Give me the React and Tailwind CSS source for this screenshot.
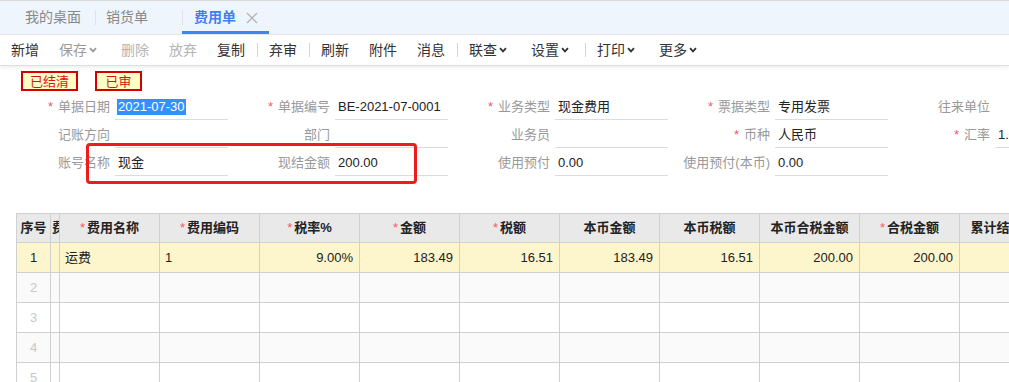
import React from "react";

const Chevron = () => (
  <svg width="8" height="6" viewBox="0 0 8 6" className="ml-[2px]">
    <path d="M1 1.2 L4 4.4 L7 1.2" fill="none" stroke="currentColor" strokeWidth="1.8" />
  </svg>
);

const toolbar = [
  { t: "新增" },
  { t: "保存", c: 1, cls: "text-[#9a9a9a]" },
  { t: "删除", cls: "text-[#b4b4b4]" },
  { t: "放弃", cls: "text-[#b4b4b4]" },
  { t: "复制" },
  "|",
  { t: "弃审" },
  "|",
  { t: "刷新" },
  { t: "附件" },
  { t: "消息" },
  "|",
  { t: "联查", c: 1 },
  { t: "设置", c: 1 },
  "|",
  { t: "打印", c: 1 },
  { t: "更多", c: 1 },
];

const rows = [
  [
    { l: "单据日期", r: 1, v: "2021-07-30", sel: 1 },
    { l: "单据编号", r: 1, v: "BE-2021-07-0001" },
    { l: "业务类型", r: 1, v: "现金费用" },
    { l: "票据类型", r: 1, v: "专用发票" },
    { l: "往来单位", noLine: 1 },
  ],
  [
    { l: "记账方向" },
    { l: "部门" },
    { l: "业务员" },
    { l: "币种", r: 1, v: "人民币" },
    { l: "汇率", r: 1, v: "1.00" },
  ],
  [
    { l: "账号名称", v: "现金" },
    { l: "现结金额", v: "200.00" },
    { l: "使用预付", v: "0.00" },
    { l: "使用预付(本币)", v: "0.00" },
    null,
  ],
];

const cols = [
  { w: "w-[34px]", h: "序号", a: "center" },
  { w: "w-[9px]", h: "费用类型", a: "clip" },
  { w: "w-[100px]", h: "费用名称", r: 1, a: "left" },
  { w: "w-[100px]", h: "费用编码", r: 1, a: "left" },
  { w: "w-[100px]", h: "税率%", r: 1, a: "right" },
  { w: "w-[100px]", h: "金额", r: 1, a: "right" },
  { w: "w-[100px]", h: "税额", r: 1, a: "right" },
  { w: "w-[100px]", h: "本币金额", a: "right" },
  { w: "w-[100px]", h: "本币税额", a: "right" },
  { w: "w-[100px]", h: "本币合税金额", a: "right" },
  { w: "w-[100px]", h: "合税金额", r: 1, a: "right" },
  { w: "w-[100px]", h: "累计结算金额", a: "right" },
];

const row1 = ["1", "", "运费", "1", "9.00%", "183.49", "16.51", "183.49", "16.51", "200.00", "200.00", ""];

const rowBg = ["bg-[#fdf5cc]", "bg-[#fafafa]", "bg-white", "bg-[#fafafa]", "bg-white"];

export default function App() {
  return (
    <div className="relative w-[1009px] h-[382px] overflow-hidden bg-white [font-family:'Liberation_Sans','Noto_Sans_CJK_SC',sans-serif] text-[13px] text-[#222]">
      {/* Tab bar */}
      <div className="h-[35px] border-t border-t-[#d9d9d9] border-b border-b-[#e1e5eb] bg-[#eff5fd] flex items-stretch text-[14px]">
        <div className="w-[95px] pl-[25px] flex items-center text-[#888]">我的桌面</div>
        <div className="w-px bg-[#dde2e8] my-[9px]" />
        <div className="w-[86px] pl-[10px] flex items-center text-[#888]">销货单</div>
        <div className="w-px bg-[#dde2e8] my-[9px]" />
        <div className="relative w-[86px] pl-[11px] flex items-center text-[#3d7ef5] font-bold">
          费用单
          <svg width="12" height="12" viewBox="0 0 12 12" className="ml-[10px]">
            <path d="M1 1 L11 11 M11 1 L1 11" stroke="#b5b5b5" strokeWidth="1.4" />
          </svg>
          <div className="absolute left-[-1px] right-0 bottom-0 h-[3px] bg-[#3d85f0]" />
        </div>
      </div>

      {/* Toolbar */}
      <div className="h-[31px] border-b border-[#dedede] shadow-[0_2px_3px_rgba(0,0,0,0.06)] flex items-center pl-[1px] text-[14px] text-[#333]">
        {toolbar.map((it, i) =>
          it === "|" ? (
            <div key={i} className="w-px h-[14px] bg-[#d6d6d6] ml-[2px] mr-[1px]" />
          ) : (
            <div key={i} className={`px-[10px] flex items-center ${it.cls || ""}`}>
              {it.t}
              {it.c ? (
                <span className="w-[14px] flex items-center">
                  <Chevron />
                </span>
              ) : null}
            </div>
          )
        )}
      </div>

      {/* Badges */}
      <div className="flex mt-[5px] pl-[21px] gap-[17px] text-[13px] text-[#e01010]">
        <div className="w-[57px] h-[20px] border-2 border-[#d40000] bg-[#ffffc6] flex items-center justify-center leading-none">已结清</div>
        <div className="w-[47px] h-[20px] border-2 border-[#d40000] bg-[#ffffc6] flex items-center justify-center leading-none">已审</div>
      </div>

      {/* Form */}
      <div className="mt-[3px] flex flex-col gap-[2px]">
        {rows.map((r, ri) => (
          <div key={ri} className="flex h-[26px]">
            {r.map((f, fi) => (
              <div key={fi} className="w-[220px] shrink-0 flex">
                {f ? (
                  <>
                    <div className="w-[110px] shrink-0 flex items-center justify-end text-[#999] whitespace-nowrap">
                      {f.r ? <span className="text-[#f5576c] mr-[5px]">*</span> : null}
                      {f.l}
                    </div>
                    <div
                      className={`w-[113px] shrink-0 ml-[5px] mr-[-8px] flex items-center pl-[2px] whitespace-nowrap ${
                        f.noLine ? "" : "border-b border-[#dcdcdc]"
                      }`}
                    >
                      {f.sel ? (
                        <span className="bg-[#3390ff] text-white px-px leading-[16px]">{f.v}</span>
                      ) : (
                        <span className="pl-px">{f.v}</span>
                      )}
                    </div>
                  </>
                ) : null}
              </div>
            ))}
          </div>
        ))}
      </div>

      {/* Table */}
      <div className="mt-[37px] ml-[16px] w-[1143px] border-l border-t border-[#d0d0d0]">
        <div className="flex h-[29px] bg-[#e9e9e9] border-b border-[#d0d0d0] font-bold text-[#222]">
          {cols.map((c, i) => (
            <div
              key={i}
              className={`${c.w} shrink-0 border-r border-[#d0d0d0] flex items-center overflow-hidden whitespace-nowrap ${
                c.a === "clip" ? "justify-start pl-px" : "justify-center"
              }`}
            >
              {c.r ? <span className="text-[#f5576c] font-normal mr-[2px]">*</span> : null}
              {c.h}
            </div>
          ))}
        </div>
        {[0, 1, 2, 3, 4].map((ri) => (
          <div key={ri} className={`flex h-[30px] border-b border-[#d0d0d0] ${rowBg[ri]}`}>
            {cols.map((c, i) => {
              const v = ri === 0 ? row1[i] : i === 0 ? String(ri + 1) : "";
              const align =
                i === 0 ? "justify-center" : c.a === "right" ? "justify-end pr-[6px]" : "justify-start pl-[5px]";
              const color = i === 0 && ri > 0 ? "text-[#c8c8c8]" : "text-[#222]";
              return (
                <div
                  key={i}
                  className={`${c.w} shrink-0 border-r border-[#d0d0d0] flex items-center overflow-hidden whitespace-nowrap ${align} ${color}`}
                >
                  {v}
                </div>
              );
            })}
          </div>
        ))}
      </div>

      {/* Annotation box */}
      <div className="absolute left-[86px] top-[143px] w-[331px] h-[41px] border-[3px] border-[#ee1c1c] rounded-[4px] pointer-events-none" />
    </div>
  );
}
